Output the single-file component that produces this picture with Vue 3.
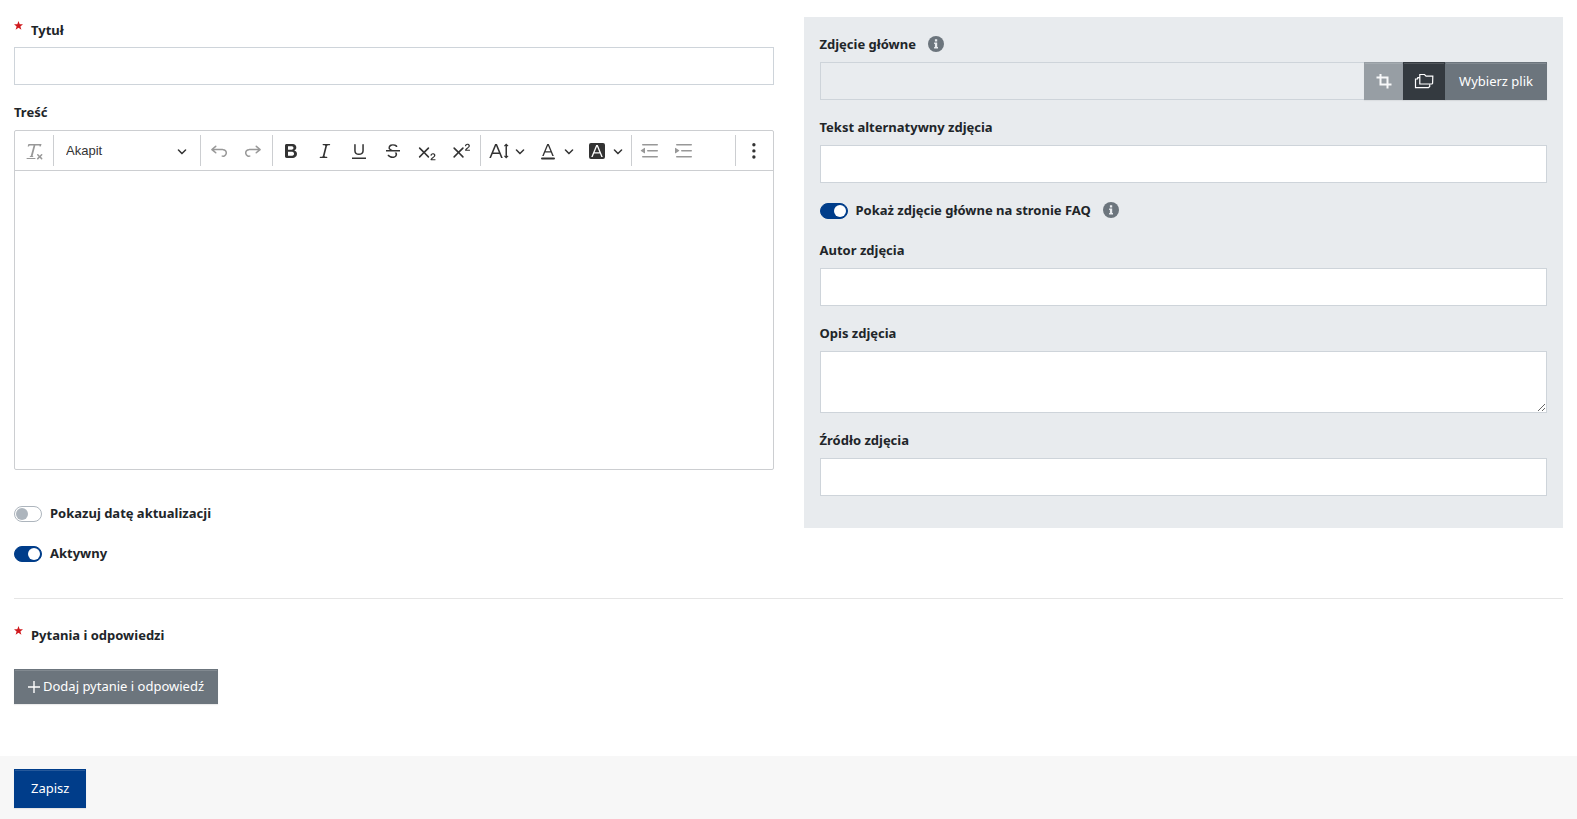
<script setup>
import { ref } from 'vue'

const title = ref('')
const body = ref('')
const block = ref('Akapit')
const showDate = ref(false)
const active = ref(true)
const showImage = ref(true)
const imageAlt = ref('')
const imageAuthor = ref('')
const imageDescription = ref('')
const imageSource = ref('')

const arrow = 'M.941 4.523a.75.75 0 1 1 1.06-1.06l3.006 3.005 3.005-3.005a.75.75 0 1 1 1.06 1.06l-3.549 3.55a.75.75 0 0 1-1.168-.136L.941 4.523z'
const undo = 'm5.042 9.367 2.189 1.837a.75.75 0 0 1-.965 1.149l-3.788-3.18a.747.747 0 0 1-.21-.284.75.75 0 0 1 .17-.945L6.23 4.762a.75.75 0 1 1 .964 1.15L4.863 7.866h8.917A.75.75 0 0 1 14 7.9a4 4 0 1 1-1.477 7.718l.344-1.489a2.5 2.5 0 1 0 1.094-4.73l.008-.032H5.042z'
const cross = 'm7.03 10.349 3.818-3.819a.8.8 0 1 1 1.132 1.132L8.16 11.48l3.819 3.818a.8.8 0 1 1-1.132 1.132L7.03 12.61l-3.818 3.82a.8.8 0 1 1-1.132-1.132L5.9 11.48 2.08 7.662A.8.8 0 1 1 3.212 6.53l3.818 3.82z'
const two = 'M15.177 18.178h2.549c.254 0 .447.05.58.152a.49.49 0 0 1 .201.413.54.54 0 0 1-.159.393c-.105.108-.266.162-.48.162h-3.594c-.245 0-.435-.066-.572-.197a.621.621 0 0 1-.205-.463c0-.114.044-.265.132-.453a1.62 1.62 0 0 1 .288-.444c.433-.436.824-.81 1.172-1.122.348-.312.597-.517.747-.615.267-.183.49-.368.667-.553.177-.185.312-.375.405-.57.093-.194.139-.384.139-.57a1.008 1.008 0 0 0-.554-.917 1.197 1.197 0 0 0-.56-.133c-.426 0-.761.182-1.005.546a2.332 2.332 0 0 0-.164.39 1.609 1.609 0 0 1-.258.488c-.096.114-.237.17-.423.17a.558.558 0 0 1-.405-.156.568.568 0 0 1-.161-.427c0-.218.05-.446.151-.683.101-.238.252-.453.452-.646s.454-.349.762-.467a2.998 2.998 0 0 1 1.081-.178c.498 0 .923.076 1.274.228a1.916 1.916 0 0 1 1.004 1.032 1.984 1.984 0 0 1-.156 1.794c-.2.32-.405.572-.613.754-.208.182-.558.468-1.048.857-.49.39-.826.691-1.008.906a2.703 2.703 0 0 0-.24.309z'
const lines = 'M2 3.75c0 .414.336.75.75.75h14.5a.75.75 0 1 0 0-1.5H2.75a.75.75 0 0 0-.75.75zm5 6c0 .414.336.75.75.75h9.5a.75.75 0 1 0 0-1.5h-9.5a.75.75 0 0 0-.75.75zM2.75 16.5h14.5a.75.75 0 1 0 0-1.5H2.75a.75.75 0 1 0 0 1.5z'
const pointer = 'M1.632 6.95 5.02 9.358a.4.4 0 0 1-.013.661l-3.39 2.207A.4.4 0 0 1 1 11.892V7.275a.4.4 0 0 1 .632-.326z'
const star = 'M4.5 0 5.7 3.2 9 3.3 6.4 5.4 7.4 8.7 4.5 6.8 1.6 8.7 2.6 5.4 0 3.3 3.3 3.2z'

const icons = {
  clear: [{ d: 'M8.69 14.915c.053.052.173.083.36.093a.366.366 0 0 1 .345.485l-.003.01a.738.738 0 0 1-.697.497h-2.67a.374.374 0 0 1-.353-.496l.013-.038a.681.681 0 0 1 .644-.458c.197-.012.325-.043.386-.093a.28.28 0 0 0 .072-.11L9.592 4.5H6.269c-.359-.017-.609.013-.75.09-.142.078-.289.265-.442.563-.192.29-.516.464-.864.464H4.17a.43.43 0 0 1-.407-.569L4.46 3h13.08l-.62 2.043a.81.81 0 0 1-.775.574h-.114a.486.486 0 0 1-.486-.486c.001-.284-.054-.464-.167-.54-.112-.076-.367-.106-.766-.091h-3.28l-2.68 10.257c-.006.074.007.127.038.158zM3 17h8a.5.5 0 1 1 0 1H3a.5.5 0 1 1 0-1zm11.299 1.17a.75.75 0 1 1-1.06-1.06l1.414-1.415-1.415-1.414a.75.75 0 0 1 1.06-1.06l1.415 1.414 1.414-1.415a.75.75 0 1 1 1.06 1.06l-1.413 1.415 1.414 1.415a.75.75 0 0 1-1.06 1.06l-1.415-1.414-1.414 1.414z' }],
  undo: [{ d: undo }],
  redo: [{ d: undo, t: 'translate(20 0) scale(-1 1)' }],
  bold: [{ d: 'M10.187 17H5.773c-.637 0-1.092-.138-1.364-.415-.273-.277-.409-.718-.409-1.323V4.738c0-.617.14-1.062.419-1.332.279-.27.73-.406 1.354-.406h4.68c.69 0 1.288.041 1.793.124.506.083.96.242 1.36.478.341.197.644.447.906.75a3.262 3.262 0 0 1 .808 2.162c0 1.401-.722 2.426-2.167 3.075C15.05 10.175 16 11.315 16 13.01a3.756 3.756 0 0 1-2.296 3.504 6.1 6.1 0 0 1-1.517.377c-.571.073-1.238.11-2 .11zm-.217-6.217H7v4.087h3.069c1.977 0 2.965-.69 2.965-2.072 0-.707-.256-1.22-.768-1.537-.512-.319-1.277-.478-2.296-.478zM7 5.13v3.619h2.606c.729 0 1.292-.067 1.69-.2a1.6 1.6 0 0 0 .91-.765c.165-.267.247-.566.247-.897 0-.707-.26-1.176-.778-1.409-.519-.232-1.31-.348-2.375-.348H7z' }],
  italic: [{ d: 'm9.586 14.633.021.004c-.036.335.095.655.393.962.082.083.173.15.274.201h1.474a.6.6 0 1 1 0 1.2H5.304a.6.6 0 0 1 0-1.2h1.15c.474-.07.809-.182 1.005-.334.157-.122.291-.32.404-.597l2.416-9.55a1.053 1.053 0 0 0-.281-.823 1.12 1.12 0 0 0-.442-.296H8.15a.6.6 0 0 1 0-1.2h6.443a.6.6 0 1 1 0 1.2h-1.195c-.376.056-.65.155-.823.296-.215.175-.423.439-.623.79l-2.366 9.347z' }],
  underline: [{ d: 'M3 18v-1.5h14V18zM5.2 10V3.6c0-.4.4-.6.8-.6.3 0 .7.2.7.6v6.2c0 2 1.3 2.8 3.2 2.8 1.9 0 3.4-.9 3.4-2.9V3.6c0-.3.4-.5.8-.5.3 0 .7.2.7.5V10c0 2.7-2.2 4-4.9 4-2.6 0-4.7-1.2-4.7-4z' }],
  strike: [
    { d: 'M7 16.4c-.8-.4-1.5-.9-2.2-1.5a.6.6 0 0 1-.2-.5l.3-.6h1c1 1.2 2.1 1.7 3.7 1.7 1 0 1.8-.3 2.3-.6.6-.4.6-1.2.6-1.3.2-1.2-.9-2.1-.9-2.1h2.1c.3.7.4 1.2.4 1.7v.8l-.6 1.2c-.6.8-1.1 1-1.6 1.2a6 6 0 0 1-2.4.6c-1 0-1.8-.3-2.5-.6zM6.8 9 6 8.3c-.4-.5-.5-.8-.5-1.6 0-.7.1-1.3.5-1.8.4-.6 1-1 1.6-1.3a6.3 6.3 0 0 1 4.7 0 4 4 0 0 1 1.7 1l.3.7c0 .1.2.4-.2.7-.4.2-.9.1-1 0a3 3 0 0 0-1.2-1c-.4-.2-1-.3-2-.4-.7 0-1.4.2-2 .6-.8.6-1 .8-1 1.5 0 .8.5 1 1.2 1.5.6.4 1.1.7 1.9 1H6.8z' },
    { d: 'M3 10.5V9h14v1.5z' },
  ],
  sub: [{ d: cross }, { d: two }],
  sup: [{ d: cross, t: 'translate(.5 0)' }, { d: two, t: 'translate(.5 -9.5)' }],
  size: [{ d: 'M9.816 11.5 7.038 4.785 4.261 11.5h5.555zm.62 1.5H3.641l-1.666 4.028H.312l5.789-14h1.875l5.789 14h-1.663L10.436 13zm7.55 2.279.779-.779.707.707-2.265 2.265-2.193-2.265.707-.707.765.765V4.825c0-.042 0-.083.002-.123l-.77.77-.707-.707L17.207 2.5l2.265 2.265-.707.707-.782-.782c.002.043.003.089.003.135v10.454z' }],
  color: [{ d: 'M12.4 10.3 10 4.5l-2.4 5.8h4.8zm.5 1.2H7.1L5.7 15H4.2l5-12h1.6l5 12h-1.5l-1.4-3.5zm3.1 7H4a1 1 0 0 1 0-2h12a1 1 0 0 1 0 2z' }],
  background: [{ d: 'M4 2h12a2 2 0 0 1 2 2v12a2 2 0 0 1-2 2H4a2 2 0 0 1-2-2V4a2 2 0 0 1 2-2zm8.38 9.262H7.62L10 5.506l2.38 5.756zm.532 1.285L14.34 16h1.426L10.804 4H9.196L4.234 16H5.66l1.428-3.453h5.824z' }],
  outdent: [{ d: lines }, { d: pointer, t: 'translate(6 0) scale(-1 1)' }],
  indent: [{ d: lines }, { d: pointer }],
  more: [{ d: 'M8.2 3.8a1.7 1.7 0 1 0 3.4 0 1.7 1.7 0 1 0-3.4 0M8.2 9.9a1.7 1.7 0 1 0 3.4 0 1.7 1.7 0 1 0-3.4 0M8.2 16a1.7 1.7 0 1 0 3.4 0 1.7 1.7 0 1 0-3.4 0z' }],
}

const tools = [
  { sep: true },
  { icon: 'undo', label: 'Cofnij', off: true },
  { icon: 'redo', label: 'Ponów', off: true },
  { sep: true },
  { icon: 'bold', label: 'Pogrubienie' },
  { icon: 'italic', label: 'Kursywa' },
  { icon: 'underline', label: 'Podkreślenie' },
  { icon: 'strike', label: 'Przekreślenie' },
  { icon: 'sub', label: 'Indeks dolny' },
  { icon: 'sup', label: 'Indeks górny' },
  { sep: true },
  { icon: 'size', label: 'Rozmiar czcionki', menu: true },
  { icon: 'color', label: 'Kolor czcionki', menu: true },
  { icon: 'background', label: 'Kolor tła czcionki', menu: true },
  { sep: true },
  { icon: 'outdent', label: 'Zmniejsz wcięcie', off: true },
  { icon: 'indent', label: 'Zwiększ wcięcie', off: true },
  { sep: true, push: true },
  { icon: 'more', label: 'Pokaż więcej' },
]
</script>

<template>
  <form class="page" @submit.prevent>
    <div class="columns">
      <div class="main">
        <div class="group">
          <label class="label required" for="title">
            <svg class="star" viewBox="0 0 9 9" aria-hidden="true"><path :d="star" /></svg>
            Tytuł
          </label>
          <input id="title" v-model="title" class="field" type="text" required />
        </div>

        <div class="group editor-group">
          <label class="label" for="body">Treść</label>
          <div class="editor">
            <div class="toolbar" role="toolbar" aria-label="Pasek narzędzi edytora">
              <button class="tool" type="button" disabled aria-label="Usuń formatowanie">
                <svg viewBox="0 0 20 20"><path v-for="p in icons.clear" :key="p.d" :d="p.d" /></svg>
              </button>
              <span class="sep"></span>
              <span class="heading">
                <select v-model="block" aria-label="Nagłówek">
                  <option>Akapit</option>
                </select>
                <svg class="arrow" viewBox="0 0 10 10" aria-hidden="true"><path :d="arrow" /></svg>
              </span>
              <template v-for="(tool, i) in tools" :key="i">
                <span v-if="tool.sep" class="sep" :class="{ push: tool.push }"></span>
                <button v-else class="tool" :class="{ menu: tool.menu }" type="button" :disabled="tool.off" :aria-label="tool.label">
                  <svg viewBox="0 0 20 20">
                    <path v-for="(p, n) in icons[tool.icon]" :key="n" :d="p.d" :transform="p.t" />
                  </svg>
                  <svg v-if="tool.menu" class="arrow" viewBox="0 0 10 10"><path :d="arrow" /></svg>
                </button>
              </template>
            </div>
            <textarea id="body" v-model="body" class="content"></textarea>
          </div>
        </div>

        <div class="switch">
          <input id="show-date" v-model="showDate" type="checkbox" role="switch" />
          <label for="show-date">Pokazuj datę aktualizacji</label>
        </div>
        <div class="switch">
          <input id="active" v-model="active" type="checkbox" role="switch" />
          <label for="active">Aktywny</label>
        </div>
      </div>

      <div class="panel">
        <div class="group">
          <div class="label-row">
            <label class="label" for="image">Zdjęcie główne</label>
            <svg class="info" viewBox="0 0 16 16" aria-hidden="true">
              <circle cx="8" cy="8" r="8" />
              <path d="M6.9 3.2h2.3v2.2H6.9zM6.1 6.6h3.1v4.5h.8v1.3H6.1v-1.3h.8V7.9h-.8z" />
            </svg>
          </div>
          <div class="file">
            <input id="image" class="field" type="text" readonly />
            <button class="btn crop" type="button" disabled aria-label="Kadruj">
              <svg viewBox="0 0 16 16"><path d="M4.5 1v10.5h11M.5 4.5h11v11" /></svg>
            </button>
            <button class="btn folder" type="button" aria-label="Przeglądaj pliki">
              <svg viewBox="0 0 20 16">
                <path d="M5.8 1.5h4.7l1.6 1.7h6.7l-.2 7-.6.8H5.8z" />
                <path d="M5.8 4.7H3.8L3.500 6H1.500v8.700h13l1.200-1.200v-2.300" />
              </svg>
            </button>
            <button class="btn choose" type="button">Wybierz plik</button>
          </div>
        </div>

        <div class="group">
          <label class="label" for="image-alt">Tekst alternatywny zdjęcia</label>
          <input id="image-alt" v-model="imageAlt" class="field" type="text" />
        </div>

        <div class="switch">
          <input id="show-image" v-model="showImage" type="checkbox" role="switch" />
          <label for="show-image">Pokaż zdjęcie główne na stronie FAQ</label>
          <svg class="info" viewBox="0 0 16 16" aria-hidden="true">
            <circle cx="8" cy="8" r="8" />
            <path d="M6.9 3.2h2.3v2.2H6.9zM6.1 6.6h3.1v4.5h.8v1.3H6.1v-1.3h.8V7.9h-.8z" />
          </svg>
        </div>

        <div class="group">
          <label class="label" for="image-author">Autor zdjęcia</label>
          <input id="image-author" v-model="imageAuthor" class="field" type="text" />
        </div>
        <div class="group">
          <label class="label" for="image-description">Opis zdjęcia</label>
          <textarea id="image-description" v-model="imageDescription" class="field area"></textarea>
        </div>
        <div class="group">
          <label class="label" for="image-source">Źródło zdjęcia</label>
          <input id="image-source" v-model="imageSource" class="field" type="text" />
        </div>
      </div>
    </div>

    <section class="questions">
      <h2 class="label required">
        <svg class="star" viewBox="0 0 9 9" aria-hidden="true"><path :d="star" /></svg>
        Pytania i odpowiedzi
      </h2>
      <button class="btn add" type="button">
        <svg viewBox="0 0 12 12"><path d="M6 0v12M0 6h12" /></svg>
        Dodaj pytanie i odpowiedź
      </button>
    </section>

    <footer class="footer">
      <button class="btn save" type="submit">Zapisz</button>
    </footer>
  </form>
</template>

<style>
body {
  margin: 0;
  background: #fff;
}
</style>

<style scoped>
.page,
.page * {
  box-sizing: border-box;
}

.page {
  min-height: 100vh;
  display: flex;
  flex-direction: column;
  font-family: "Noto Sans", "Open Sans", sans-serif;
  font-size: 13px;
  line-height: 21px;
  color: #212529;
}

.page button,
.page input,
.page textarea {
  font: inherit;
  color: inherit;
}

.columns {
  display: grid;
  grid-template-columns: 1fr 1fr;
  align-items: start;
  gap: 30px;
  padding: 17px 14px 0;
}

.group {
  display: flex;
  flex-direction: column;
  margin-bottom: 16px;
}

.label {
  margin: 0;
  padding: 1px 0 7px;
  font-size: 13px;
  font-weight: 700;
  line-height: 21px;
}

.required {
  display: flex;
  gap: 8px;
  padding: 3px 0 6px;
}

.star {
  width: 9px;
  height: 9px;
  margin-top: 1px;
  fill: #d0191d;
}

.field {
  width: 100%;
  height: 38px;
  margin: 0;
  padding: 6px 12px;
  border: 1px solid #ced4da;
  border-radius: 0;
  background: #fff;
  outline: none;
}

.field[readonly] {
  background: #e9ecef;
}

.area {
  display: block;
  height: 62px;
  resize: vertical;
}

.editor-group {
  margin-bottom: 32px;
}

.editor {
  border: 1px solid #ccced1;
  border-radius: 2px;
}

.toolbar {
  display: flex;
  align-items: center;
  gap: 4px;
  height: 40px;
  padding: 0 4px;
  border-bottom: 1px solid #ccced1;
}

.tool {
  display: flex;
  align-items: center;
  justify-content: center;
  flex: none;
  width: 30px;
  height: 30px;
  padding: 0;
  border: 0;
  background: none;
}

.tool svg {
  flex: none;
  width: 20px;
  height: 20px;
  fill: #333;
}

.tool:disabled svg {
  opacity: 0.5;
}

.tool.menu {
  justify-content: flex-start;
  gap: 6px;
  width: 45px;
  padding-left: 5px;
}

.toolbar .arrow {
  width: 10px;
  height: 10px;
  fill: #333;
}

.sep {
  flex: none;
  width: 1px;
  height: 31px;
  margin-right: -1px;
  background: #ccced1;
}

.sep.push {
  margin-left: auto;
}

.heading {
  display: grid;
  grid-template-columns: 1fr 19px;
  align-items: center;
  flex: none;
  width: 139px;
}

.heading select {
  grid-area: 1 / 1 / 2 / 3;
  height: 30px;
  margin: 0;
  padding: 0 9px;
  border: 0;
  background: none;
  appearance: none;
  font: 13px/20px "Liberation Sans", Arial, sans-serif;
  color: #333;
}

.heading .arrow {
  grid-area: 1 / 2;
  pointer-events: none;
}

.content {
  display: block;
  width: 100%;
  height: 298px;
  margin: 0;
  padding: 12px 8px;
  border: 0;
  background: none;
  outline: none;
  resize: none;
}

.switch {
  display: flex;
  align-items: center;
  gap: 8px;
  height: 24px;
  margin-bottom: 16px;
}

.switch label {
  padding-bottom: 2px;
  font-weight: 700;
}

.switch input {
  display: flex;
  align-items: center;
  width: 28px;
  height: 16px;
  margin: 0;
  padding: 1px;
  border: 1px solid #adb5bd;
  border-radius: 8px;
  background: #fff;
  appearance: none;
}

.switch input::before {
  content: "";
  width: 12px;
  height: 12px;
  border-radius: 50%;
  background: #adb5bd;
}

.switch input:checked {
  justify-content: flex-end;
  border-color: #003d8a;
  background: #003d8a;
}

.switch input:checked::before {
  background: #fff;
}

.panel {
  padding: 16px;
  background: #e8ebee;
}

.label-row {
  display: flex;
  gap: 12px;
}

.info {
  width: 16px;
  height: 16px;
  margin-top: 3px;
  fill: #6c757d;
}

.info path {
  fill: #e9ecef;
}

.switch .info {
  margin: 0 0 2px 4px;
}

.file {
  display: flex;
}

.file .field {
  flex: 1;
  width: auto;
  min-width: 0;
  border-right: 0;
}

.btn {
  display: flex;
  align-items: center;
  justify-content: center;
  flex: none;
  margin: 0;
  padding: 0 13px;
  border: 1px solid #6c757d;
  background: #6c757d;
  box-shadow: inset 0 1px 0 rgba(255, 255, 255, 0.15), 0 1px 1px rgba(0, 0, 0, 0.075);
}

.page .btn {
  color: #fff;
}

.btn svg {
  flex: none;
  fill: none;
  stroke: #fff;
}

.btn.crop {
  width: 39px;
  padding: 0;
  opacity: 0.65;
}

.crop svg {
  width: 16px;
  height: 16px;
  stroke-width: 2;
}

.btn.folder {
  width: 42px;
  padding: 0;
  border-color: #343a40;
  background: #343a40;
}

.folder svg {
  width: 20px;
  height: 16px;
  stroke-width: 1.2;
}

.questions {
  display: flex;
  flex-direction: column;
  align-items: flex-start;
  margin: 16px 14px 52px;
  padding-top: 23px;
  border-top: 1px solid #e5e5e5;
}

.btn.add {
  gap: 3px;
  height: 35px;
  margin-top: 17px;
}

.add svg {
  width: 12px;
  height: 12px;
  stroke-width: 1.4;
}

.footer {
  flex: 1;
  padding: 13px 14px 11px;
  background: #f7f7f7;
}

.btn.save {
  height: 39px;
  padding: 0 16px;
  border-color: #003d8a;
  background: #003d8a;
}
</style>
